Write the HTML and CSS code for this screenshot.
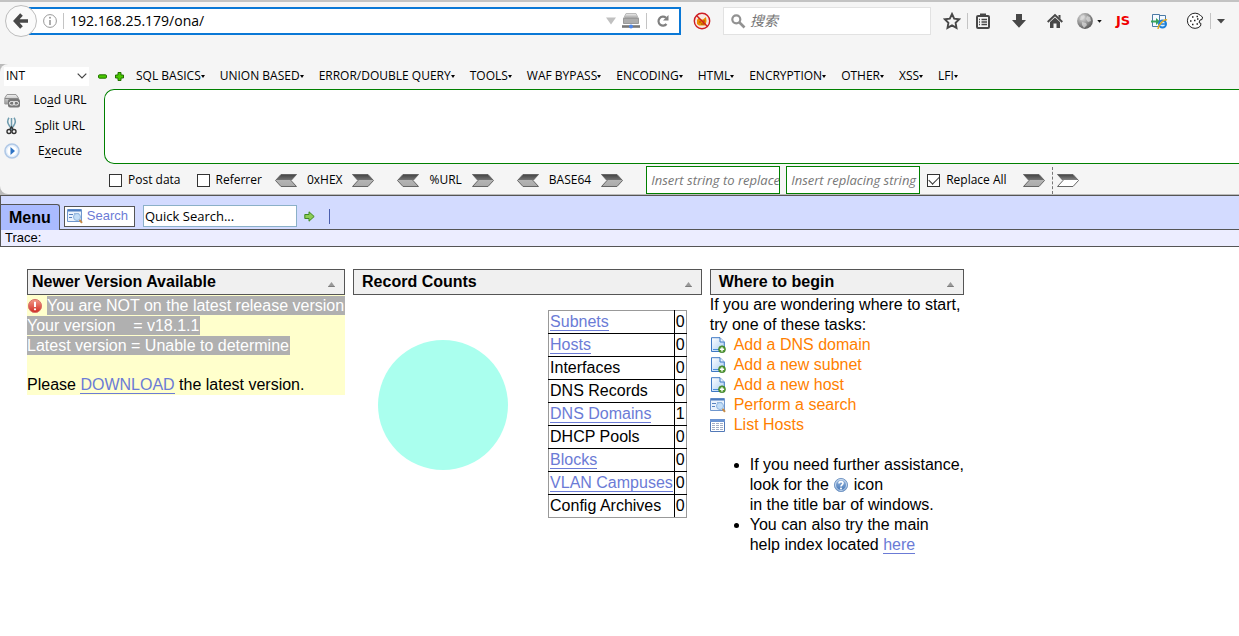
FILE: index.html
```html
<!DOCTYPE html>
<html lang="en">
<head>
<meta charset="utf-8">
<title>OpenNetAdmin</title>
<link rel="stylesheet" href="styles.css">
</head>
<body>
<svg class="defs" aria-hidden="true">
  <defs>
    <linearGradient id="steel" x1="0" y1="0" x2="0" y2="1"><stop offset="0" stop-color="#444"/><stop offset=".5" stop-color="#777"/><stop offset=".5" stop-color="#b4b4b4"/><stop offset="1" stop-color="#aaa"/></linearGradient>
    <linearGradient id="steelOpen" x1="0" y1="0" x2="0" y2="1"><stop offset="0" stop-color="#444"/><stop offset=".5" stop-color="#888"/><stop offset=".5" stop-color="#fff"/><stop offset="1" stop-color="#fff"/></linearGradient>
    <linearGradient id="metal" x1="0" y1="0" x2="0" y2="1"><stop offset="0" stop-color="#f0f0f0"/><stop offset="1" stop-color="#999"/></linearGradient>
    <radialGradient id="globe" cx=".35" cy=".3" r=".75"><stop offset="0" stop-color="#ddd"/><stop offset="1" stop-color="#555"/></radialGradient>
    <linearGradient id="paper" x1="0" y1="0" x2="1" y2="1"><stop offset="0" stop-color="#fff"/><stop offset="1" stop-color="#a9cdf3"/></linearGradient>
    <linearGradient id="red" x1="0" y1="0" x2="0" y2="1"><stop offset="0" stop-color="#f49a88"/><stop offset="1" stop-color="#cf2b20"/></linearGradient>
    <linearGradient id="blue" x1="0" y1="0" x2="0" y2="1"><stop offset="0" stop-color="#9dbbe0"/><stop offset="1" stop-color="#3f73b5"/></linearGradient>
  </defs>
  <symbol id="right" viewBox="0 0 22 13"><path d="M.5.5H16L21.500 6.500 16 12.500H.5L6 6.500z" fill="url(#steel)" stroke="#666"/></symbol>
  <symbol id="right-open" viewBox="0 0 22 13"><path d="M.5.5H16L21.500 6.500 16 12.500H.5L6 6.500z" fill="url(#steelOpen)" stroke="#666"/></symbol>
  <symbol id="left" viewBox="0 0 22 13"><path d="M21.500.5H6L.5 6.500 6 12.500H21.500L16 6.500z" fill="url(#steel)" stroke="#666"/></symbol>
  <symbol id="page-add" viewBox="0 0 16 16"><path d="M1.500.7H10L14.300 5V14.500H1.500z" fill="url(#paper)" stroke="#3f79c4"/><path d="M10 .7V5H14.300" fill="#e8f2ff" stroke="#3f79c4"/><path d="M3 12.500H9" stroke="#4a90d9"/><circle cx="12" cy="12.300" r="3.500" fill="#559b35" stroke="#2f7321" stroke-width=".6"/><path d="M12 10.200V14.400M9.900 12.300H14.100" stroke="#fff" stroke-width="1.400"/></symbol>
  <symbol id="form-search" viewBox="0 0 16 16"><path d="M.5 1.500H14.500V13.500H.5z" fill="#eaf2fc" stroke="#6f96cd"/><path d="M1 2.500H14" stroke="#4c7cc0" stroke-width="2"/><path d="M2 6.500H6M2 9.500H5" stroke="#5883c0"/><path d="M7 5.500H12" stroke="#9bb8de"/><circle cx="10" cy="9" r="3.500" fill="#c2ddf7" stroke="#8fb5df"/><path d="M12.600 11.800L15 14.800" stroke="#c58a45" stroke-width="2"/></symbol>
  <symbol id="list" viewBox="0 0 16 16"><path d="M.5 2.500H14.500V14.500H.5z" fill="#fff" stroke="#5279b7"/><path d="M0 3.500H15" stroke="#6a93d2" stroke-width="3"/><path d="M2 6.500H5M6 6.500H9M10 6.500H13M2 8.500H5M6 8.500H9M10 8.500H13M2 10.500H5M6 10.500H9M10 10.500H13M2 12.500H5M6 12.500H9M10 12.500H13" stroke="#a3aec5"/></symbol>
  <symbol id="collapse" viewBox="0 0 8 6"><path d="M0 5.500L4 0 8 5.500z" fill="#999"/><path d="M0 5.500H8" stroke="#666"/></symbol>
</svg>

<header class="browser">
  <div class="tab-edge"></div>
  <nav class="navbar" aria-label="Browser">
    <button class="back" aria-label="Back"><svg width="16" height="16" viewBox="0 0 16 16"><path d="M8.500 1.500L2.500 8l6 6.500M3 8H15" fill="none" stroke="#484848" stroke-width="3.600"/></svg></button>
    <div class="url-box">
      <svg width="14" height="14" viewBox="0 0 14 14"><circle cx="7" cy="7" r="6.400" fill="none" stroke="#999"/><path d="M7 6V11" stroke="#999" stroke-width="1.600"/><circle cx="7" cy="3.700" r="1" fill="#999"/></svg>
      <i class="divider"></i>
      <input class="url" aria-label="Address" value="192.168.25.179/ona/">
      <svg width="10" height="8" viewBox="0 0 10 8"><path d="M0 .5H10L5 7.500z" fill="#c0c0c0"/></svg>
      <svg width="18" height="16" viewBox="0 0 18 16"><path d="M4 .5H14L16.500 5.500H1.500z" fill="url(#metal)" stroke="#bbb"/><path d="M1.500 5.500H16.500V10.500H1.500z" fill="#888" stroke="#999"/><path d="M2 7H16M2 9H16" stroke="#d0d0d0"/><path d="M0 13.500H18" stroke="#777" stroke-width="2.600"/><circle cx="9" cy="13.500" r="2" fill="#4d86e8"/></svg>
      <i class="divider"></i>
      <button class="reload" aria-label="Reload"><svg width="12" height="12" viewBox="0 0 12 12"><path d="M9.500 9A4.500 4.500 0 1 1 9 2.800" fill="none" stroke="#808080" stroke-width="2.200"/><path d="M11.500 0V5.500H6z" fill="#808080"/></svg></button>
    </div>
    <button class="tool s12" aria-label="Blocked"><svg width="18" height="18" viewBox="0 0 18 18"><circle cx="9" cy="9" r="7.600" fill="#f8e8e0"/><path d="M4 8L5.500 6 8 7.500H10L13 5 13.500 9 12.500 13.500H6L4 12z" fill="#ed8a00"/><path d="M6 10H8M10 9H12M8 12H11" stroke="#9b4c00"/><circle cx="9" cy="9" r="7.700" fill="none" stroke="#ce1c22" stroke-width="1.400"/><path d="M3.500 3.500L14.500 14.500" stroke="#ce1c22" stroke-width="1.400"/></svg></button>
    <div class="search-box">
      <svg width="15" height="15" viewBox="0 0 15 15"><circle cx="5.300" cy="5.300" r="4" fill="none" stroke="#929292" stroke-width="2.200"/><path d="M8.500 8.500L13.500 13.500" stroke="#929292" stroke-width="2.600"/></svg>
      <input aria-label="Search" placeholder="搜索">
    </div>
    <button class="tool s12" aria-label="Bookmark"><svg width="18" height="18" viewBox="0 0 18 18"><path d="M9 2L11.200 6.600 16.200 7.300 12.600 10.800 13.500 15.900 9 13.400 4.500 15.900 5.400 10.800 1.800 7.300 6.800 6.600z" fill="none" stroke="#484848" stroke-width="1.900"/></svg></button>
    <i class="divider s6"></i>
    <button class="tool s6" aria-label="Bookmarks list"><svg width="18" height="18" viewBox="0 0 18 18"><rect x="3" y="4" width="12" height="12" rx="1" fill="none" stroke="#484848" stroke-width="2"/><path d="M6 1.500H12V5H6z" fill="#484848"/><path d="M5 7.500H6M7.500 7.500H13M5 10H6M7.500 10H13M5 12.500H6M7.500 12.500H13" stroke="#484848" stroke-width="1.500"/></svg></button>
    <button class="tool s18" aria-label="Downloads"><svg width="18" height="18" viewBox="0 0 18 18"><path d="M6 2H12V8H16L9 15.800 2 8H6z" fill="#484848"/></svg></button>
    <button class="tool s18" aria-label="Home"><svg width="18" height="18" viewBox="0 0 18 18"><path d="M1.700 10L9 3 16.300 10" fill="none" stroke="#484848" stroke-width="1.900"/><path d="M12.500 3H14.500V7L12.500 5z" fill="#484848"/><path d="M4 10L9 5.500 14 10V16H10.500V11.500H7.500V16H4z" fill="#484848"/></svg></button>
    <button class="tool s12" aria-label="Proxy"><svg width="18" height="18" viewBox="0 0 18 18"><circle cx="9" cy="9" r="7.900" fill="url(#globe)"/><path d="M5 4L8 3 9 5 6 8 4 8zM11 4L14 5 15 9 12 10 10 7zM6 10L10 11 11 13 8 16 6 13z" fill="#ddd" opacity=".7"/></svg></button>
    <svg class="caret" width="5" height="3" viewBox="0 0 6 4"><path d="M0 0H6L3 3.500z" fill="#111"/></svg>
    <button class="tool js s12" aria-label="JavaScript">JS</button>
    <button class="tool s18" aria-label="Open in IE"><svg width="18" height="18" viewBox="0 0 18 18"><path d="M2.500 2.500H9.500V14.500H2.500zM9.500 3.500H15.500V12H9.500z" fill="#f5faff" stroke="#4b7aa5"/><path d="M1 8.500H6V6L10 9.500 6 13V10.500H1z" fill="#38a35c"/><circle cx="12.500" cy="12" r="3.500" fill="#d9efff" stroke="#1c7ed6" stroke-width="2"/><path d="M9.500 12H16" stroke="#1c7ed6" stroke-width="1.500"/><path d="M8 17C8 13 14 6.500 17 8" fill="none" stroke="#e9aa18" stroke-width="1.400"/></svg></button>
    <button class="tool s18" aria-label="Cookies"><svg width="18" height="18" viewBox="0 0 18 18"><path d="M14.500 3.500A7.600 7.600 0 1 0 14.500 14L15 11.500 13 10.500 14 8 16 7.500 16.500 5z" fill="#fff" stroke="#222"/><path d="M6 5H7.500M10.500 4.500H12M4 9H5.500M8 8.500H9.500M6 12.500H7.500M10.500 12H12M11 7H12.500" stroke="#222" stroke-width="1.500"/></svg></button>
    <i class="divider s6"></i>
    <button class="more" aria-label="More"><svg width="8" height="5" viewBox="0 0 8 5"><path d="M0 0H8L4 4.500z" fill="#484848"/></svg></button>
  </nav>
</header>

<div class="hackbar-wrap">
<section class="hackbar" aria-label="HackBar">
  <div class="menus">
    <div class="pick">
      <select aria-label="Type"><option>INT</option></select>
      <svg width="10" height="6" viewBox="0 0 10 6"><path d="M.7.7L5 5 9.300.7" fill="none" stroke="#444" stroke-width="1.200"/></svg>
    </div>
    <button aria-label="Remove"><svg width="9" height="9" viewBox="0 0 9 9"><rect x=".5" y="2.800" width="8" height="3.400" rx="1" fill="#48c800" stroke="#237000"/></svg></button>
    <button class="plus" aria-label="Add"><svg width="9" height="9" viewBox="0 0 9 9"><path d="M3 .5H6V3H8.500V6H6V8.500H3V6H.5V3H3z" fill="#48c800" stroke="#237000"/></svg></button>
    <ul class="menu-list">
      <li><button>SQL BASICS</button></li>
      <li><button>UNION BASED</button></li>
      <li><button>ERROR/DOUBLE QUERY</button></li>
      <li><button>TOOLS</button></li>
      <li><button>WAF BYPASS</button></li>
      <li><button>ENCODING</button></li>
      <li><button>HTML</button></li>
      <li><button>ENCRYPTION</button></li>
      <li><button>OTHER</button></li>
      <li><button>XSS</button></li>
      <li><button>LFI</button></li>
    </ul>
  </div>
  <div class="work">
    <div class="actions">
      <button><svg width="16" height="16" viewBox="0 0 16 16"><path d="M3 2.500H12L14.500 6V12H.8V6z" fill="url(#metal)" stroke="#999"/><path d="M1 6.500H14" stroke="#888"/><rect x="4" y="7" width="12" height="8.500" rx="2" fill="#777"/><rect x="5.500" y="9.500" width="5" height="3.500" rx="1.700" fill="none" stroke="#eee"/><rect x="9.500" y="9.500" width="5" height="3.500" rx="1.700" fill="none" stroke="#eee"/></svg><span>Lo<u>a</u>d URL</span></button>
      <button><svg width="16" height="18" viewBox="0 0 16 18"><path d="M5 .8C3.300 3 3.300 6 5.500 9L8.500 13M10 .8C11.700 3 11.700 6 9.500 9L6.500 13M7.500 1V9" fill="none" stroke="#6e9bae" stroke-width="1.500"/><circle cx="5" cy="14.500" r="2" fill="none" stroke="#333" stroke-width="1.400"/><circle cx="10" cy="14.500" r="2" fill="none" stroke="#333" stroke-width="1.400"/><path d="M6 12L7.500 10 9 12" fill="none" stroke="#333" stroke-width="1.400"/></svg><span><u>S</u>plit URL</span></button>
      <button><svg width="16" height="16" viewBox="0 0 16 16"><circle cx="8" cy="8" r="7" fill="#e3eefb" stroke="#b0c8e6" stroke-width="1.600"/><circle cx="8" cy="8" r="4.800" fill="#fff"/><path d="M6.500 4L11 8 6.500 12z" fill="#2f74c5"/></svg><span>E<u>x</u>ecute</span></button>
    </div>
    <textarea aria-label="URL to load"></textarea>
  </div>
  <div class="options">
    <label class="check"><input type="checkbox">Post data</label>
    <label class="check"><input type="checkbox">Referrer</label>
    <div class="codec hex"><button aria-label="Decode hex"><svg width="22" height="13"><use href="#left"/></svg></button><span>0xHEX</span><button aria-label="Encode hex"><svg width="22" height="13"><use href="#right"/></svg></button></div>
    <div class="codec"><button aria-label="Decode URL"><svg width="22" height="13"><use href="#left"/></svg></button><span>%URL</span><button aria-label="Encode URL"><svg width="22" height="13"><use href="#right"/></svg></button></div>
    <div class="codec"><button aria-label="Decode base64"><svg width="22" height="13"><use href="#left"/></svg></button><span>BASE64</span><button aria-label="Encode base64"><svg width="22" height="13"><use href="#right"/></svg></button></div>
    <input class="replace" aria-label="String to replace" placeholder="Insert string to replace">
    <input class="replace" aria-label="Replacing string" placeholder="Insert replacing string">
    <label class="check all"><input type="checkbox" checked>Replace All</label>
    <button aria-label="Replace"><svg width="22" height="13"><use href="#right"/></svg></button>
    <i class="dashed"></i>
    <button aria-label="Next"><svg width="22" height="13"><use href="#right-open"/></svg></button>
  </div>
</section>
</div>

<div class="app-bar">
  <button class="menu-tab">Menu</button>
  <button class="search-btn"><svg width="16" height="16"><use href="#form-search"/></svg>Search</button>
  <input class="quick" aria-label="Quick search" value="Quick Search...">
  <button class="go" aria-label="Go"><svg width="11" height="11" viewBox="0 0 11 11"><path d="M.8 3.500H5V.8L10.200 5.500 5 10.200V7.500H.8z" fill="#8ccc55" stroke="#3f8a22"/></svg></button>
  <i class="bar-sep"></i>
</div>
<div class="trace">Trace:</div>

<main class="panels">
  <section>
    <h2 class="tight">Newer Version Available <svg width="7" height="5"><use href="#collapse"/></svg></h2>
    <div class="notice">
      <p><svg class="alert" width="16" height="16" viewBox="0 0 16 16"><circle cx="8" cy="8" r="6.600" fill="url(#red)" stroke="#d9766c"/><path d="M8 3.800V9" stroke="#fff" stroke-width="2"/><circle cx="8" cy="11.300" r="1.100" fill="#fff"/></svg><mark>You are NOT on the latest release version</mark></p>
      <p><mark>Your version &nbsp;&nbsp; = v18.1.1</mark></p>
      <p><mark>Latest version = Unable to determine</mark></p>
      <p class="please">Please <a href="#download">DOWNLOAD</a> the latest version.</p>
    </div>
  </section>

  <section>
    <h2>Record Counts <svg width="7" height="5"><use href="#collapse"/></svg></h2>
    <div class="counts">
      <svg class="pie" width="130" height="130" viewBox="0 0 130 130" role="img" aria-label="Record share"><circle cx="65" cy="65" r="65" fill="#aaffee"/></svg>
      <table>
        <tbody>
          <tr><td><a href="#subnets">Subnets</a></td><td>0</td></tr>
          <tr><td><a href="#hosts">Hosts</a></td><td>0</td></tr>
          <tr><td>Interfaces</td><td>0</td></tr>
          <tr><td>DNS Records</td><td>0</td></tr>
          <tr><td><a href="#domains">DNS Domains</a></td><td>1</td></tr>
          <tr><td>DHCP Pools</td><td>0</td></tr>
          <tr><td><a href="#blocks">Blocks</a></td><td>0</td></tr>
          <tr><td><a href="#vlans">VLAN Campuses</a></td><td>0</td></tr>
          <tr><td>Config Archives</td><td>0</td></tr>
        </tbody>
      </table>
    </div>
  </section>

  <section>
    <h2>Where to begin <svg width="7" height="5"><use href="#collapse"/></svg></h2>
    <p>If you are wondering where to start,<br>try one of these tasks:</p>
    <ul class="tasks">
      <li><a href="#add-domain"><svg width="16" height="16"><use href="#page-add"/></svg>Add a DNS domain</a></li>
      <li><a href="#add-subnet"><svg width="16" height="16"><use href="#page-add"/></svg>Add a new subnet</a></li>
      <li><a href="#add-host"><svg width="16" height="16"><use href="#page-add"/></svg>Add a new host</a></li>
      <li><a href="#search"><svg width="16" height="16"><use href="#form-search"/></svg>Perform a search</a></li>
      <li><a href="#list"><svg width="16" height="16"><use href="#list"/></svg>List Hosts</a></li>
    </ul>
    <ul class="help">
      <li>If you need further assistance,<br>look for the <svg class="q" width="16" height="16" viewBox="0 0 16 16"><circle cx="8" cy="8" r="6.600" fill="url(#blue)" stroke="#7a9cc8"/><circle cx="8" cy="8" r="5.500" fill="none" stroke="#dce8f6" stroke-width=".8"/><path d="M6 6.500C6 4 10 4 10 6.300 10 7.800 8 7.800 8 9.500" fill="none" stroke="#fff" stroke-width="1.600"/><circle cx="8" cy="11.500" r="1" fill="#fff"/></svg> icon<br>in the title bar of windows.</li>
      <li>You can also try the main<br>help index located <a href="#here">here</a></li>
    </ul>
  </section>
</main>
</body>
</html>
```

FILE: styles.css
```css
* { box-sizing: border-box; }
body { margin: 0; background: #fff; color: #000; font: 16px/20px "Liberation Sans", Arial, sans-serif; }
svg { display: block; flex: none; }
.defs { position: absolute; width: 0; height: 0; }
button, input, select, textarea { font: inherit; color: inherit; margin: 0; padding: 0; }
button { border: 0; background: none; display: flex; align-items: center; white-space: nowrap; }
ul, p, h2 { margin: 0; padding: 0; }
ul { list-style: none; }
a { color: #6b7bd6; text-decoration: none; border-bottom: 1px solid #6b7bd6; }

/* Browser toolbar */
.browser { background: #f5f5f5; font-family: "Open Sans", "Noto Sans CJK SC", sans-serif; padding-bottom: 24px; }
.tab-edge { height: 2px; background: #c3c3c3; }
.navbar { display: flex; align-items: center; height: 38px; padding: 5px 14px 5px 5px; }
.navbar .divider { width: 1px; height: 16px; background: #c4c4c4; flex: none; }
.back { width: 32px; height: 32px; border: 1px solid #bdbdbd; border-radius: 50%; background: #fafafa; justify-content: center; flex: none; z-index: 1; }
.url-box { flex: 1; display: flex; align-items: center; gap: 6px; height: 28px; margin-left: -8px; padding: 0 10px 0 14px; border: 2px solid #0a78d6; background: #fff; border-left: 0; }
.url-box .url { flex: 1; min-width: 0; border: 0; outline: 0; background: none; font-size: 14px; line-height: 20px; }
.url-box .reload { margin: 0 0 0 4px; }
.search-box { display: flex; align-items: center; gap: 4px; width: 208px; height: 28px; margin-left: 12px; padding: 0 7px; border: 1px solid #e2e2e2; background: #fff; }
.search-box input { flex: 1; min-width: 0; border: 0; outline: 0; background: none; font-size: 14px; }
.search-box input::placeholder { color: #757575; font-style: italic; opacity: 1; }
.tool { width: 18px; height: 18px; flex: none; justify-content: center; }
.navbar .s6 { margin-left: 6px; }
.s12 { margin-left: 12px; }
.s18 { margin-left: 18px; }
.js { color: #f00000; font: bold 13px/18px "DejaVu Sans", sans-serif; }
.caret { margin-left: 3px; }
.more { margin-left: 6px; }

/* HackBar */
.hackbar-wrap { background: #bbb; border-bottom: 1px solid #bbb; }
.hackbar { background: #f5f5f5; border-radius: 8px 0 0 8px; padding-top: 2px; font: 12px/18px "Open Sans", sans-serif; }
.menus { display: flex; align-items: center; height: 20px; padding-left: 4px; }
.pick { display: grid; align-items: center; width: 85px; background: #fff; margin-right: 9px; }
.pick > * { grid-area: 1 / 1; }
.pick select { appearance: none; width: 100%; height: 19px; padding-left: 2px; border: 0; background: none; }
.pick svg { justify-self: end; margin-right: 2px; pointer-events: none; }
.plus { margin-left: 8px; }
.menu-list { display: flex; gap: 15px; margin-left: 12px; }
.menu-list button::after { content: ""; border: 2px solid transparent; border-top: 3px solid #000; border-bottom: 0; }
.work { display: flex; padding-top: 3px; }
.actions { display: flex; flex-direction: column; justify-content: space-between; width: 104px; flex: none; padding: 1px 16px 3px 4px; }
.actions button { height: 20px; }
.actions span { flex: 1; text-align: center; padding-left: 12px; }
.actions u { text-underline-offset: 2px; }
.work textarea { flex: 1; height: 75px; border: 1px solid #008000; border-right: 0; border-radius: 10px 0 0 10px; background: #fff; resize: none; outline: 0; padding: 6px; }
.options { display: flex; align-items: center; height: 30px; padding: 2px 0 0 109px; white-space: nowrap; }
.check { display: flex; align-items: center; gap: 6px; margin-right: 16px; }
.check input { appearance: none; width: 13px; height: 13px; border: 1px solid #333; background: #fff; display: grid; place-items: center; }
.check input:checked::after { content: ""; width: 9px; height: 5px; border: solid #333; border-width: 0 0 1px 1px; transform: translateY(-1px) rotate(-45deg); }
.codec { display: flex; align-items: center; gap: 10px; margin-right: 23px; }
.hex { margin-left: -3px; }
.replace { width: 134px; height: 28px; margin-right: 6px; padding: 0 0 0 4px; border: 1px solid #008000; background: #fff; outline: 0; font-size: 13px; }
.replace::placeholder { color: #777; font-style: italic; opacity: 1; }
.check.all { margin: 0 16px 0 1px; }
.dashed { height: 27px; margin: 0 4px 0 7px; border-left: 1px dashed #777; }

/* Application header */
.app-bar { display: flex; align-items: center; height: 35px; border: solid #555; border-width: 1px 0 1px 1px; background: #d3dbff; }
.menu-tab { align-self: flex-end; height: 26px; margin-bottom: -1px; padding: 0 8px; border: solid #555; border-width: 1px 1px 0 0; border-top-right-radius: 3px; background: #aabbff; font-weight: bold; }
.search-btn { gap: 4px; height: 21px; margin: 7px 0 0 4px; padding: 0 6px 0 2px; border: 1px solid #555; background: #fff; color: #6b7bd6; font-size: 13px; }
.quick { width: 154px; height: 22px; margin: 7px 0 0 8px; padding: 0 1px; border: 1px solid #8bb0c8; background: #fff; font: 13px/18px "Open Sans", sans-serif; outline: 0; }
.go { margin: 7px 0 0 7px; }
.bar-sep { width: 1px; height: 15px; margin: 7px 0 0 14px; background: #4b5fae; }
.trace { height: 17px; padding-left: 4px; border: solid #555; border-width: 0 0 1px 1px; background: #ecedff; font-size: 13px; line-height: 16px; }

/* Desktop panels */
.panels { display: flex; align-items: flex-start; gap: 8px; padding: 22px 27px; white-space: nowrap; }
h2 { display: flex; align-items: center; justify-content: space-between; height: 26px; padding: 0 9px 0 8px; border: 1px solid #555; background: #f0f0f0; font-size: 16px; }
h2.tight { padding-left: 4px; }
h2 svg { margin-top: 4px; }
.notice { background: #ffffcc; }
.notice p { display: flex; align-items: flex-end; min-height: 20px; }
.notice .please { display: block; margin-top: 20px; }
.alert { margin: 0 4px 1px 0; }
mark { padding-right: 1px; background: #b0b0b0; color: #fff; line-height: 19px; }
.counts { display: flex; align-items: flex-start; gap: 40px; padding: 15px 15px 0 25px; }
.pie { margin-top: 30px; }
table { border-collapse: collapse; border: 1px solid #999; }
td { height: 23px; padding: 1px; border: 1px solid #000; line-height: 20px; }
tr:first-child td { border-top-color: #999; }
tr:last-child td { border-bottom-color: #999; }
td:first-child { border-left-color: #999; }
td:last-child { border-right-color: #999; }
.tasks a { display: flex; align-items: center; gap: 8px; color: #ff7f00; border: 0; }
.help { margin-top: 20px; padding-left: 40px; list-style: disc; }
.help .q { display: inline-block; vertical-align: -3px; }
```
